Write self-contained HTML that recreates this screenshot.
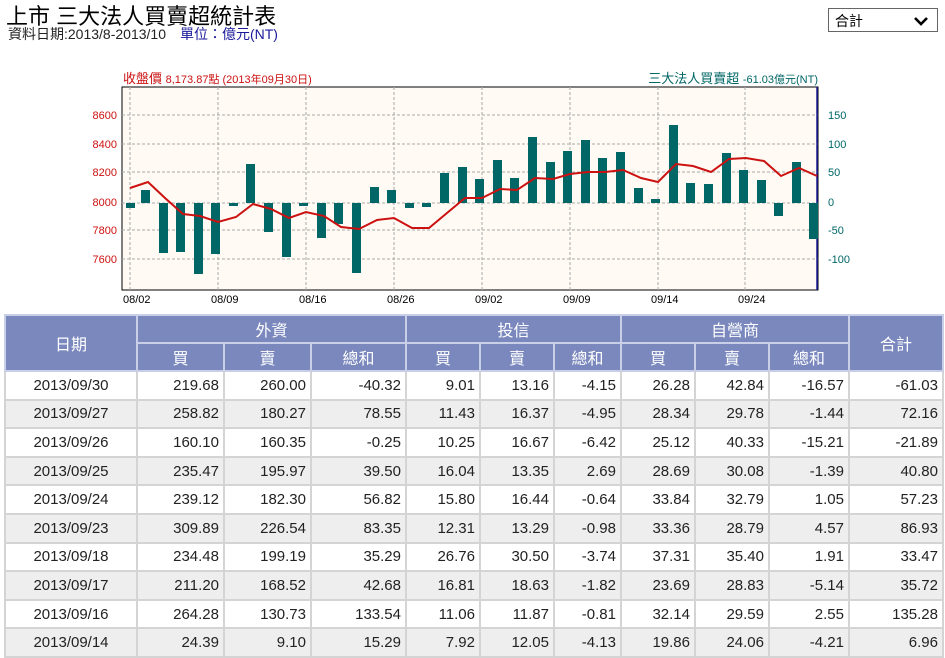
<!DOCTYPE html>
<html><head><meta charset="utf-8"><style>
body{margin:0;width:945px;height:658px;overflow:hidden;background:#fff;font-family:"Liberation Sans","Noto Sans CJK TC",sans-serif;position:relative}
.t1{position:absolute;left:6px;top:-1px;font-size:22px;color:#000}
.t2{position:absolute;left:8px;top:24px;font-size:14px;color:#222}
.t2 span{color:#1a1a9a;margin-left:14px}
.sel{position:absolute;left:828px;top:8px;width:110px;height:24px;border:1px solid #666;box-sizing:border-box;font-size:14px;padding:2px 0 0 6px}
table{position:absolute;left:4px;top:314px;border-collapse:collapse;font-size:15px;table-layout:fixed}
td,th{border:2px solid #d4d4d4;padding:0 4px;text-align:right;color:#222;font-weight:normal}
th{background:#7a88bd;color:#fff;text-align:center;border-color:#c9cfe6;font-size:16px}
tr.h{height:28px}
tr.r{height:28.6px}
td.d{text-align:center}
tr.g td{background:#eeeeee}
</style></head><body>
<div class="t1">上市 三大法人買賣超統計表</div>
<div class="t2">資料日期:2013/8-2013/10<span>單位：億元(NT)</span></div>
<div class="sel">合計<svg style="position:absolute;right:8px;top:6px" width="16" height="12" viewBox="0 0 16 12"><path d="M2 3L8 9L14 3" stroke="#000" stroke-width="2.6" fill="none"/></svg></div>
<svg style="position:absolute;left:0;top:0" width="945" height="314" font-family="Liberation Sans, Noto Sans CJK TC, sans-serif">
<text x="123" y="83" font-size="13" fill="#cc1111">收盤價 <tspan font-size="11">8,173.87點 (2013年09月30日)</tspan></text>
<text x="818" y="83" font-size="13" fill="#006666" text-anchor="end">三大法人買賣超 <tspan font-size="11">-61.03億元(NT)</tspan></text>
<rect x="122" y="87" width="696" height="203" fill="#fffbf4" stroke="#000" stroke-width="1"/>
<g stroke="#aaa" stroke-dasharray="3,2" stroke-width="1">
<line x1="122" x2="818" y1="115" y2="115"/><line x1="122" x2="818" y1="144" y2="144"/><line x1="122" x2="818" y1="172" y2="172"/><line x1="122" x2="818" y1="203" y2="203"/><line x1="122" x2="818" y1="230" y2="230"/><line x1="122" x2="818" y1="259" y2="259"/>
<line y1="87" y2="290" x1="130" x2="130"/><line y1="87" y2="290" x1="218" x2="218"/><line y1="87" y2="290" x1="306" x2="306"/><line y1="87" y2="290" x1="394" x2="394"/><line y1="87" y2="290" x1="482" x2="482"/><line y1="87" y2="290" x1="570" x2="570"/><line y1="87" y2="290" x1="658" x2="658"/><line y1="87" y2="290" x1="745" x2="745"/>
</g>
<line x1="817" x2="817" y1="87" y2="290" stroke="#1a1a9a" stroke-width="1.5"/>
<g font-size="11" fill="#cc1111" text-anchor="end">
<text x="117" y="119">8600</text><text x="117" y="148">8400</text><text x="117" y="176">8200</text><text x="117" y="206">8000</text><text x="117" y="234">7800</text><text x="117" y="263">7600</text></g>
<g font-size="11" fill="#006666">
<text x="828" y="119">150</text><text x="828" y="148">100</text><text x="828" y="176">50</text><text x="828" y="206">0</text><text x="828" y="234">-50</text><text x="828" y="263">-100</text></g>
<g font-size="11" fill="#000">
<text x="123" y="303">08/02</text><text x="211" y="303">08/09</text><text x="299" y="303">08/16</text><text x="387" y="303">08/26</text><text x="475" y="303">09/02</text><text x="563" y="303">09/09</text><text x="651" y="303">09/14</text><text x="738" y="303">09/24</text></g>
<g fill="#006666">
<rect x="126" y="203" width="9" height="5"/><rect x="141" y="190" width="9" height="13"/><rect x="159" y="203" width="9" height="50"/><rect x="176" y="203" width="9" height="49"/><rect x="194" y="203" width="9" height="71"/><rect x="211" y="203" width="9" height="51"/><rect x="229" y="203" width="9" height="3"/><rect x="246" y="164" width="9" height="39"/><rect x="264" y="203" width="9" height="29"/><rect x="282" y="203" width="9" height="54"/><rect x="299" y="203" width="9" height="3"/><rect x="317" y="203" width="9" height="35"/><rect x="334" y="203" width="9" height="21"/><rect x="352" y="203" width="9" height="70"/><rect x="370" y="187" width="9" height="16"/><rect x="387" y="190" width="9" height="13"/><rect x="405" y="203" width="9" height="5"/><rect x="422" y="203" width="9" height="4"/><rect x="440" y="173" width="9" height="30"/><rect x="458" y="167" width="9" height="36"/>
<rect x="475" y="179" width="9" height="24"/><rect x="493" y="160" width="9" height="43"/><rect x="510" y="178" width="9" height="25"/><rect x="528" y="137" width="9" height="66"/><rect x="546" y="162" width="9" height="41"/><rect x="563" y="151" width="9" height="52"/><rect x="581" y="140" width="9" height="63"/><rect x="598" y="158" width="9" height="45"/><rect x="616" y="152" width="9" height="51"/><rect x="634" y="188" width="9" height="15"/><rect x="651" y="199" width="9" height="4"/><rect x="669" y="125" width="9" height="78"/><rect x="686" y="183" width="9" height="20"/><rect x="704" y="184" width="9" height="19"/><rect x="722" y="153" width="9" height="50"/><rect x="739" y="170" width="9" height="33"/><rect x="757" y="180" width="9" height="23"/><rect x="774" y="203" width="9" height="13"/><rect x="792" y="162" width="9" height="41"/><rect x="809" y="203" width="9" height="36"/>
</g>
<polyline fill="none" stroke="#cc1111" stroke-width="2" points="130,188 148,182 165,198 183,214 200,216 218,222 236,217 253,204 271,209 289,218 306,212 324,216 341,227 359,229 377,220 394,218 412,228 429,228 447,213 465,198 482,198 500,189 517,190 535,178 553,179 570,174 588,172 605,172 623,170 641,178 658,182 676,164 693,166 711,172 729,159 746,158 764,161 781,176 799,168 817,176"/>
</svg>
<table>
<colgroup><col style="width:132px"><col style="width:87px"><col style="width:87px"><col style="width:95px"><col style="width:74px"><col style="width:74px"><col style="width:67px"><col style="width:74px"><col style="width:74px"><col style="width:80px"><col style="width:94px"></colgroup>
<tr class="h"><th rowspan="2">日期</th><th colspan="3">外資</th><th colspan="3">投信</th><th colspan="3">自營商</th><th rowspan="2">合計</th></tr>
<tr class="h"><th>買</th><th>賣</th><th>總和</th><th>買</th><th>賣</th><th>總和</th><th>買</th><th>賣</th><th>總和</th></tr>
<tr class="r"><td class="d">2013/09/30</td><td>219.68</td><td>260.00</td><td>-40.32</td><td>9.01</td><td>13.16</td><td>-4.15</td><td>26.28</td><td>42.84</td><td>-16.57</td><td>-61.03</td></tr>
<tr class="r g"><td class="d">2013/09/27</td><td>258.82</td><td>180.27</td><td>78.55</td><td>11.43</td><td>16.37</td><td>-4.95</td><td>28.34</td><td>29.78</td><td>-1.44</td><td>72.16</td></tr>
<tr class="r"><td class="d">2013/09/26</td><td>160.10</td><td>160.35</td><td>-0.25</td><td>10.25</td><td>16.67</td><td>-6.42</td><td>25.12</td><td>40.33</td><td>-15.21</td><td>-21.89</td></tr>
<tr class="r g"><td class="d">2013/09/25</td><td>235.47</td><td>195.97</td><td>39.50</td><td>16.04</td><td>13.35</td><td>2.69</td><td>28.69</td><td>30.08</td><td>-1.39</td><td>40.80</td></tr>
<tr class="r"><td class="d">2013/09/24</td><td>239.12</td><td>182.30</td><td>56.82</td><td>15.80</td><td>16.44</td><td>-0.64</td><td>33.84</td><td>32.79</td><td>1.05</td><td>57.23</td></tr>
<tr class="r g"><td class="d">2013/09/23</td><td>309.89</td><td>226.54</td><td>83.35</td><td>12.31</td><td>13.29</td><td>-0.98</td><td>33.36</td><td>28.79</td><td>4.57</td><td>86.93</td></tr>
<tr class="r"><td class="d">2013/09/18</td><td>234.48</td><td>199.19</td><td>35.29</td><td>26.76</td><td>30.50</td><td>-3.74</td><td>37.31</td><td>35.40</td><td>1.91</td><td>33.47</td></tr>
<tr class="r g"><td class="d">2013/09/17</td><td>211.20</td><td>168.52</td><td>42.68</td><td>16.81</td><td>18.63</td><td>-1.82</td><td>23.69</td><td>28.83</td><td>-5.14</td><td>35.72</td></tr>
<tr class="r"><td class="d">2013/09/16</td><td>264.28</td><td>130.73</td><td>133.54</td><td>11.06</td><td>11.87</td><td>-0.81</td><td>32.14</td><td>29.59</td><td>2.55</td><td>135.28</td></tr>
<tr class="r g"><td class="d">2013/09/14</td><td>24.39</td><td>9.10</td><td>15.29</td><td>7.92</td><td>12.05</td><td>-4.13</td><td>19.86</td><td>24.06</td><td>-4.21</td><td>6.96</td></tr>
</table>
</body></html>
